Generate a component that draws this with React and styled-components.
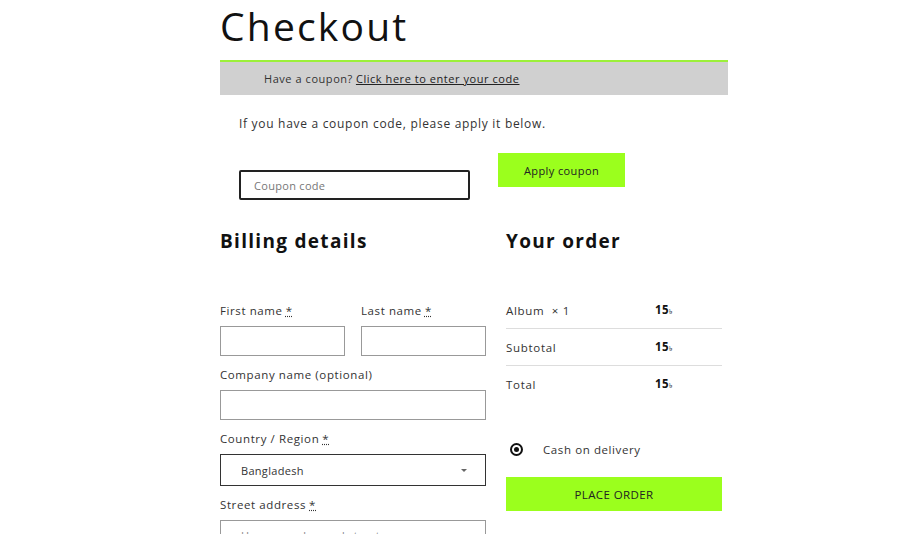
import React from 'react'
import styled, { createGlobalStyle } from 'styled-components'

const Global = createGlobalStyle`
    body{
        margin: 0;
        background: #ffffff;
        font-family: "Open Sans", "Noto Sans", sans-serif;
        color: #222;
    }
`

const Page = styled.div`
    width: 508px;
    padding-left: 220px;
    height: 534px;
    overflow: hidden;
`

const Title = styled.h1`
    margin: 0;
    padding-top: 2px;
    font-size: 39px;
    font-weight: 400;
    line-height: 48px;
    letter-spacing: 2.2px;
    color: #111;
`

const CouponBar = styled.div`
    margin-top: 10px;
    height: 33px;
    background: #d0d0d0;
    border-top: 2px solid #9cf03a;
    display: flex;
    align-items: center;
    padding-left: 44px;
    font-size: 11px;
    letter-spacing: 0.55px;
    color: #333;
    a{
        color: #222;
        margin-left: 3px;
        text-decoration: underline;
    }
`

const CouponForm = styled.div`
    padding: 20px 0 0 19px;
    p{
        margin: 0;
        font-size: 12px;
        letter-spacing: 0.7px;
        color: #333;
    }
`

const CouponRow = styled.div`
    display: flex;
    align-items: flex-start;
    gap: 28px;
    margin-top: 21px;
`

const CouponInput = styled.div`
    margin-top: 17px;
    width: 214px;
    height: 26px;
    border: 2px solid #222;
    border-radius: 2px;
    display: flex;
    align-items: center;
    padding-left: 13px;
    font-size: 11px;
    letter-spacing: 0.3px;
    color: #777;
`

const GreenButton = styled.div`
    background: #9bff1d;
    display: flex;
    align-items: center;
    justify-content: center;
    color: #222;
    font-size: ${p => p.$small ? '11px' : '11.5px'};
    width: ${p => p.$width};
    height: ${p => p.$height};
    letter-spacing: 0.4px;
`

const Columns = styled.div`
    display: grid;
    grid-template-columns: 266px 216px;
    gap: 20px;
    margin-top: 27px;
`

const Heading = styled.h2`
    margin: 0 0 48px;
    font-size: 19px;
    font-weight: 700;
    line-height: 28px;
    letter-spacing: 1.3px;
    color: #111;
`

const NameRow = styled.div`
    display: grid;
    grid-template-columns: 125px 125px;
    gap: 16px;
`

const Field = styled.div`
    margin-bottom: 11px;
`

const Label = styled.div`
    font-size: 11.5px;
    letter-spacing: 0.6px;
    color: #333;
    line-height: 16px;
    margin-bottom: 7px;
    abbr{
        text-decoration: underline dotted;
        margin-left: 3px;
    }
`

const Input = styled.div`
    height: ${p => p.$dark ? '30px' : '28px'};
    border: 1px solid ${p => p.$dark ? '#333' : '#999'};
    display: flex;
    align-items: center;
    justify-content: space-between;
    padding: 0 18px 0 20px;
    font-size: 11px;
    letter-spacing: 0.3px;
    color: ${p => p.$placeholder ? '#888' : '#333'};
`

const Caret = styled.span`
    width: 0;
    height: 0;
    border-left: 3px solid transparent;
    border-right: 3px solid transparent;
    border-top: 3px solid #666;
`

const OrderList = styled.div`
    margin-top: -11px;
`

const OrderRow = styled.div`
    display: grid;
    grid-template-columns: 149px 1fr;
    height: 36px;
    align-items: center;
    font-size: 11.5px;
    letter-spacing: 0.7px;
    color: #333;
    border-bottom: ${p => p.$last ? 'none' : '1px solid #ddd'};
    b{
        font-weight: 700;
        color: #111;
        letter-spacing: 0.4px;
    }
    small{
        font-size: 7px;
        font-weight: 400;
    }
`

const Payment = styled.div`
    display: flex;
    align-items: center;
    gap: 20px;
    margin: 40px 0 20px 4px;
    font-size: 11.5px;
    letter-spacing: 0.6px;
    color: #333;
`

const Radio = styled.span`
    width: 9px;
    height: 9px;
    border: 2px solid #111;
    border-radius: 50%;
    display: flex;
    align-items: center;
    justify-content: center;
    &::after{
        content: '';
        width: 5px;
        height: 5px;
        background: #111;
        border-radius: 50%;
    }
`

const App = () => {
    return (
        <Page>
            <Global />
            <Title>Checkout</Title>
            <CouponBar>Have a coupon? <a>Click here to enter your code</a></CouponBar>
            <CouponForm>
                <p>If you have a coupon code, please apply it below.</p>
                <CouponRow>
                    <CouponInput>Coupon code</CouponInput>
                    <GreenButton $small $width="127px" $height="34px">Apply coupon</GreenButton>
                </CouponRow>
            </CouponForm>
            <Columns>
                <div>
                    <Heading>Billing details</Heading>
                    <NameRow>
                        <Field>
                            <Label>First name<abbr>*</abbr></Label>
                            <Input />
                        </Field>
                        <Field>
                            <Label>Last name<abbr>*</abbr></Label>
                            <Input />
                        </Field>
                    </NameRow>
                    <Field>
                        <Label>Company name (optional)</Label>
                        <Input />
                    </Field>
                    <Field>
                        <Label>Country / Region<abbr>*</abbr></Label>
                        <Input $dark>Bangladesh<Caret /></Input>
                    </Field>
                    <Field>
                        <Label>Street address<abbr>*</abbr></Label>
                        <Input $placeholder>House number and street name</Input>
                    </Field>
                </div>
                <div>
                    <Heading>Your order</Heading>
                    <OrderList>
                        <OrderRow><span>Album &nbsp;× 1</span><b>15<small>৳</small></b></OrderRow>
                        <OrderRow><span>Subtotal</span><b>15<small>৳</small></b></OrderRow>
                        <OrderRow $last><span>Total</span><b>15<small>৳</small></b></OrderRow>
                    </OrderList>
                    <Payment><Radio />Cash on delivery</Payment>
                    <GreenButton $width="216px" $height="34px">PLACE ORDER</GreenButton>
                </div>
            </Columns>
        </Page>
    )
}

export default App
